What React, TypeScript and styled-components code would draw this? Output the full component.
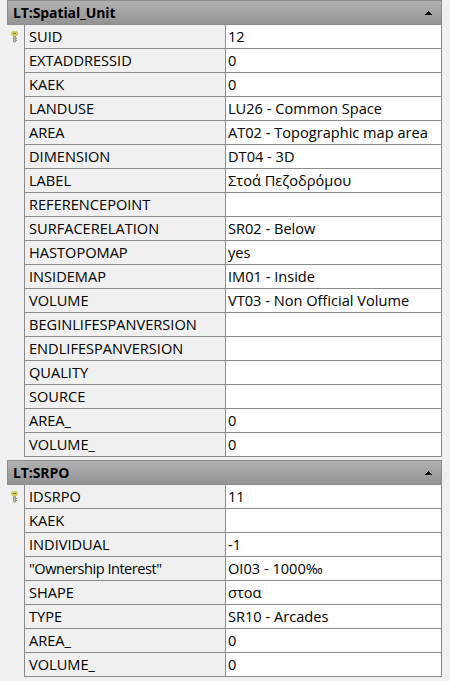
import React from "react";
import styled, { createGlobalStyle } from "styled-components";

const Global = createGlobalStyle`
  html, body { margin: 0; padding: 0; background: #f0f0f0; }
  body { font-family: "Open Sans", "Liberation Sans", sans-serif; color: #000; }
  * { box-sizing: border-box; }
`;

const Page = styled.div`
  width: 450px;
  height: 681px;
  overflow: hidden;
  padding-left: 7px;
  display: flex;
  flex-direction: column;
  gap: 3px;
`;

const Section = styled.section`
  width: 435px;
  display: flex;
  flex-direction: column;
`;

const Header = styled.header`
  height: 25px;
  border: 1px solid #8c8c8c;
  background: linear-gradient(#b2b2b2, #939393);
  display: flex;
  align-items: center;
  justify-content: space-between;
  padding: 0 9px 0 5px;
  font-size: 14px;
  font-weight: 700;
  letter-spacing: -0.1px;
`;

const Grid = styled.div`
  display: flex;
  flex-direction: column;
`;

const Row = styled.div`
  height: 24px;
  display: flex;
`;

const Gutter = styled.div`
  width: 17px;
  flex: none;
  display: flex;
  justify-content: center;
  padding-top: 6px;
  padding-right: 3px;
`;

const Cells = styled.div`
  flex: 1;
  display: flex;
  border-left: 1px solid #8c8c8c;
  border-right: 1px solid #8c8c8c;
  border-bottom: 1px solid #8c8c8c;
`;

const Name = styled.div<{ $mixed: boolean }>`
  width: 201px;
  flex: none;
  padding-left: 4px;
  font-size: 14.6px;
  line-height: 23px;
  letter-spacing: ${(p) => (p.$mixed ? "-0.5px" : "0")};
  border-right: 1px solid #8c8c8c;
  white-space: nowrap;
`;

const Value = styled.div`
  flex: 1;
  background: #fff;
  padding-left: 2px;
  font-size: 14.6px;
  line-height: 23px;
  white-space: nowrap;
`;

const KeyIcon = () => (
  <svg width="7" height="12" viewBox="0 0 7 12" shapeRendering="crispEdges">
    <rect x="0" y="1" width="7" height="3" fill="#cfc95a" />
    <rect x="1" y="0" width="5" height="5" fill="#d6d05c" />
    <rect x="2" y="2" width="3" height="1" fill="#77754a" />
    <rect x="2" y="5" width="3" height="6" fill="#9c9c84" />
    <rect x="3" y="5" width="1" height="7" fill="#b8b8a4" />
    <rect x="5" y="7" width="1" height="1" fill="#8a8a70" />
    <rect x="5" y="9" width="1" height="1" fill="#8a8a70" />
  </svg>
);

const Collapse = () => (
  <svg width="7" height="4" viewBox="0 0 7 4" shapeRendering="crispEdges">
    <path d="M3 0h1v1h1v1h1v1h1v1H0V3h1V2h1V1h1z" fill="#000" />
  </svg>
);

type Field = [string, string];

const spatial: Field[] = [
  ["SUID", "12"],
  ["EXTADDRESSID", "0"],
  ["KAEK", "0"],
  ["LANDUSE", "LU26 - Common Space"],
  ["AREA", "AT02 - Topographic map area"],
  ["DIMENSION", "DT04 - 3D"],
  ["LABEL", "Στοά Πεζοδρόμου"],
  ["REFERENCEPOINT", ""],
  ["SURFACERELATION", "SR02 - Below"],
  ["HASTOPOMAP", "yes"],
  ["INSIDEMAP", "IM01 - Inside"],
  ["VOLUME", "VT03 - Non Official Volume"],
  ["BEGINLIFESPANVERSION", ""],
  ["ENDLIFESPANVERSION", ""],
  ["QUALITY", ""],
  ["SOURCE", ""],
  ["AREA_", "0"],
  ["VOLUME_", "0"],
];

const srpo: Field[] = [
  ["IDSRPO", "11"],
  ["KAEK", ""],
  ["INDIVIDUAL", "-1"],
  ['"Ownership Interest"', "OI03 - 1000‰"],
  ["SHAPE", "στοα"],
  ["TYPE", "SR10 - Arcades"],
  ["AREA_", "0"],
  ["VOLUME_", "0"],
];

const Table = ({ title, fields }: { title: string; fields: Field[] }) => (
  <Section>
    <Header>
      <span>{title}</span>
      <Collapse />
    </Header>
    <Grid>
      {fields.map(([name, value], i) => (
        <Row key={name}>
          <Gutter>{i === 0 && <KeyIcon />}</Gutter>
          <Cells>
            <Name $mixed={name !== name.toUpperCase()}>{name}</Name>
            <Value>{value}</Value>
          </Cells>
        </Row>
      ))}
    </Grid>
  </Section>
);

export default function App() {
  return (
    <Page>
      <Global />
      <Table title="LT:Spatial_Unit" fields={spatial} />
      <Table title="LT:SRPO" fields={srpo} />
    </Page>
  );
}
